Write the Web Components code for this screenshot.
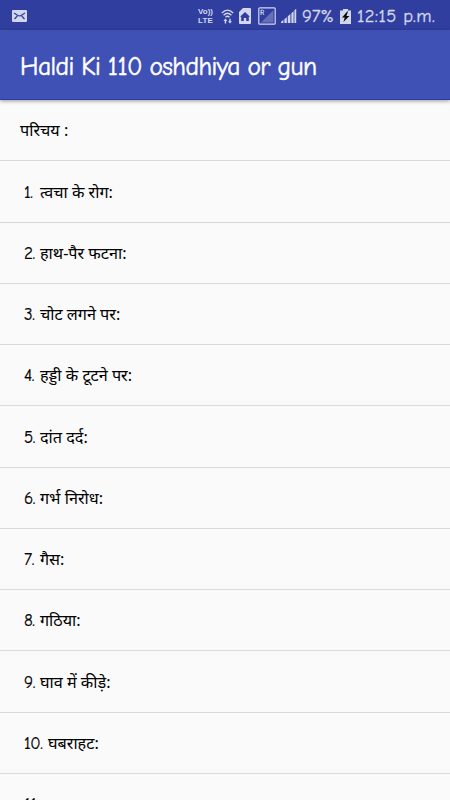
<!DOCTYPE html>
<html lang="hi">
<head>
<meta charset="utf-8">
<title>Haldi Ki 110 oshdhiya or gun</title>
<style>
    body {
        margin: 0;
        height: 800px;
        overflow: hidden;
        background: #fafafa;
        font-family: "Comic Neue", "Noto Sans", "Noto Sans Devanagari", cursive;
    }
</style>
</head>
<body>
<status-bar battery="97%" time="12:15 p.m."></status-bar>
<app-bar>Haldi Ki 110 oshdhiya or gun</app-bar>
<topic-list>
    <topic-row>परिचय :</topic-row>
    <topic-row number="1.">त्वचा के रोग:</topic-row>
    <topic-row number="2.">हाथ-पैर फटना:</topic-row>
    <topic-row number="3.">चोट लगने पर:</topic-row>
    <topic-row number="4.">हड्डी के टूटने पर:</topic-row>
    <topic-row number="5.">दांत दर्द:</topic-row>
    <topic-row number="6.">गर्भ निरोध:</topic-row>
    <topic-row number="7.">गैस:</topic-row>
    <topic-row number="8.">गठिया:</topic-row>
    <topic-row number="9.">घाव में कीड़े:</topic-row>
    <topic-row number="10.">घबराहट:</topic-row>
    <topic-row number="11.">घाव</topic-row>
</topic-list>

<script>
/* <status-bar>: notification icon on the left, signal icons and clock on the right */
class StatusBar extends HTMLElement {
    connectedCallback() {
        this.attachShadow({ mode: "open" });
        this.shadowRoot.innerHTML = `
            <style>
                :host {
                    display: flex;
                    align-items: center;
                    box-sizing: border-box;
                    height: 30px;
                    padding: 2px 13px 0 12px;
                    background: #303f9f;
                    color: #d3d7ee;
                    font-size: 18.5px;
                    font-weight: 400;
                    -webkit-text-stroke: 0.3px;
                }
                svg { display: block; flex: none; fill: #d3d7ee; }
                .space { flex: 1; }
                .volte {
                    display: grid;
                    grid-template-rows: 9px 9px;
                    font: 700 8px/9px "Liberation Sans", sans-serif;
                    width: 17px;
                    margin-right: 6px;
                    white-space: nowrap;
                    -webkit-text-stroke: 0;
                }
                .volte div:last-child { letter-spacing: 0.2px; }
                .wifi { margin-right: 5px; }
                .home { margin-right: 7px; }
                .sim { margin-right: 5px; }
                .signal { margin-right: 5px; }
                .battery { width: 36px; white-space: nowrap; }
                .cell { margin: 0 6px 0 2px; }
                .time { width: 80px; letter-spacing: 0.4px; white-space: nowrap; }
            </style>
            <svg width="15" height="12" viewBox="0 0 15 12">
                <rect width="15" height="12" rx="1"/>
                <path d="M2 3 L5.5 5.2 Q7.5 6.5 9.5 5.2 L13 3 M2.5 9 L5.3 6 M12.5 9 L9.7 6" fill="none" stroke="#303f9f" stroke-width="1.3"/>
            </svg>
            <div class="space"></div>
            <div class="volte"><div>Vo))</div><div>LTE</div></div>
            <svg class="wifi" width="13" height="17" viewBox="0 0 13 17">
                <path d="M.8 5 Q6.5 -.8 12.2 5 M2.6 7.2 Q6.5 3.3 10.4 7.2 M4.5 9.2 Q6.5 7.2 8.5 9.2" fill="none" stroke="#d3d7ee" stroke-width="1.3"/>
                <path d="M4.4 10.6 L6.4 13 H5.1 V15.4 H3.7 V13 H2.4 Z M9 15.6 L11 13.2 H9.7 V10.8 H8.3 V13.2 H7 Z"/>
            </svg>
            <svg class="home" width="12" height="16" viewBox="0 0 12 16">
                <path d="M4 0 H11 Q12 0 12 1 V15 Q12 16 11 16 H1 Q0 16 0 15 V4 Z"/>
                <path d="M6 4 L11 8.7 H9.8 V13 H7.2 V10 H4.8 V13 H2.2 V8.7 H1 Z" fill="#303f9f"/>
            </svg>
            <svg class="sim" width="18" height="18" viewBox="0 0 18 18">
                <rect x=".8" y=".8" width="16.4" height="16.4" rx="1" fill="none" stroke="#d3d7ee" stroke-width="1.2"/>
                <path d="M15.5 3 V15.5 H3 Z" fill="#6570b8"/>
                <path d="M3 8 V3.2 H4.6 Q5.8 3.2 5.8 4.4 T4.6 5.6 H3 M4.6 5.6 L6 8" fill="none" stroke="#d3d7ee" stroke-width="1"/>
            </svg>
            <svg class="signal" width="16" height="16" viewBox="0 0 16 16">
                <path d="M0 14 L2.4 11.8 V15 H0 Z M3.4 11.3 L5.8 9.2 V15 H3.4 Z M6.8 8.3 L9.4 6 V15 H6.8 Z M10.4 5.2 L12.6 3.2 V15 H10.4 Z M13.4 2.3 L15.2 .8 V15 H13.4 Z"/>
            </svg>
            <span class="battery"></span>
            <svg class="cell" width="11" height="15" viewBox="0 0 11 15">
                <path d="M3 0 H8 V1.5 H11 V15 H0 V1.5 H3 Z"/>
                <path d="M7.2 2.6 L2 8.4 H4.8 L3.4 12.9 L9.4 7 H6.4 L8 2.6 Z" fill="#08090f"/>
            </svg>
            <span class="time"></span>
        `;
        this.shadowRoot.querySelector(".battery").textContent = this.getAttribute("battery");
        this.shadowRoot.querySelector(".time").textContent = this.getAttribute("time");
    }
}

/* <app-bar>: the title goes in the slot */
class AppBar extends HTMLElement {
    connectedCallback() {
        this.attachShadow({ mode: "open" });
        this.shadowRoot.innerHTML = `
            <style>
                :host {
                    display: flex;
                    align-items: center;
                    box-sizing: border-box;
                    position: relative;
                    height: 70px;
                    padding: 3px 20px 0;
                    background: #3f51b5;
                    border-bottom: 1px solid #283ea0;
                    box-shadow: 0 1px 4px rgba(0, 0, 0, 0.4);
                    color: #fff;
                    font-size: 25.5px;
                    letter-spacing: -0.55px;
                    word-spacing: -0.4px;
                    white-space: nowrap;
                    -webkit-text-stroke: 0.5px;
                }
            </style>
            <slot></slot>
        `;
    }
}

class TopicList extends HTMLElement {
    connectedCallback() {
        this.attachShadow({ mode: "open" });
        this.shadowRoot.innerHTML = `
            <style>
                :host { display: block; color: #000; }
            </style>
            <slot></slot>
        `;
    }
}

/* <topic-row number="1.">: the number is optional */
class TopicRow extends HTMLElement {
    connectedCallback() {
        this.attachShadow({ mode: "open" });
        this.shadowRoot.innerHTML = `
            <style>
                :host {
                    display: flex;
                    align-items: baseline;
                    box-sizing: border-box;
                    height: 61.25px;
                    padding: 18.4px 20px 0;
                    border-bottom: 1px solid #d9d9d9;
                    font: 16.2px/24px "Noto Sans", "Noto Sans Devanagari", sans-serif;
                    white-space: nowrap;
                }
                .number {
                    font-family: "Comic Neue", cursive;
                    font-size: 17px;
                    letter-spacing: -0.4px;
                    margin: 0 4px;
                    width: 12px;
                    -webkit-text-stroke: 0.2px;
                }
                .number.wide { width: 20px; }
            </style>
            <slot></slot>
        `;
        if (this.hasAttribute("number")) {
            this.number = document.createElement("span");
            this.number.className = "number";
            this.number.textContent = this.getAttribute("number");
            this.number.classList.toggle("wide", this.number.textContent.length > 2);
            this.shadowRoot.querySelector("slot").before(this.number);
        }
    }
}

customElements.define("status-bar", StatusBar);
customElements.define("app-bar", AppBar);
customElements.define("topic-list", TopicList);
customElements.define("topic-row", TopicRow);
</script>
</body>
</html>
